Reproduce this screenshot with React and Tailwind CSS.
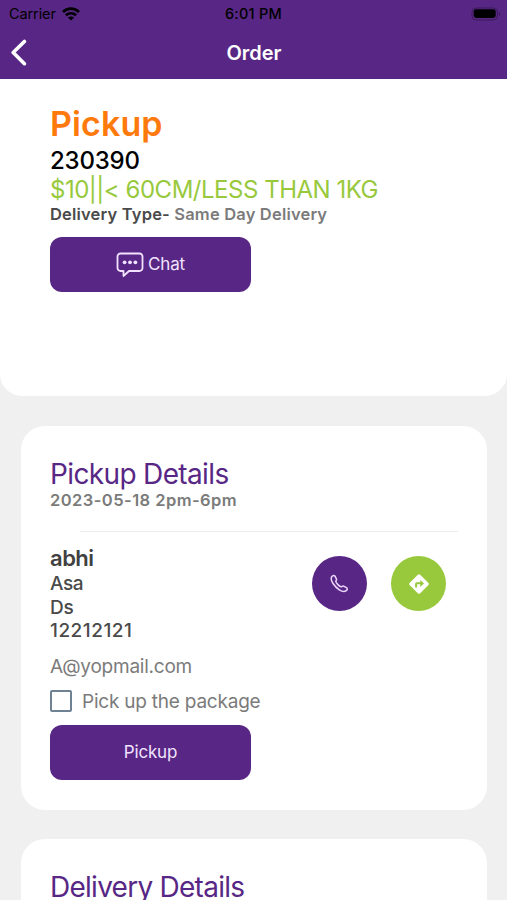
const line = "whitespace-nowrap";

function StatusBar() {
  return (
    <div className="flex h-[27px] items-center px-[9px] text-black">
      <div className="flex flex-1 items-center gap-[6px]">
        <span className="text-[14.5px] leading-[27px] tracking-[-0.1px]">Carrier</span>
        <svg width="18" height="14" viewBox="0 0 18 14" fill="none" stroke="#000" strokeWidth="2.6">
          <path d="M1 5C5.500 .5 12.500 .5 17 5" />
          <path d="M3.900 8.300C6.700 5.600 11.300 5.600 14.100 8.300" />
          <path d="M9 13.500L5.900 10.500C7.600 9 10.400 9 12.100 10.500Z" fill="#000" stroke="none" />
        </svg>
      </div>
      <span className="text-[14.5px] leading-[27px] font-medium tracking-[0.25px]">6:01 PM</span>
      <div className="flex flex-1 justify-end">
        <svg className="-mr-[3px]" width="30" height="14" viewBox="0 0 30 14">
          <rect x="1" y="1" width="25.5" height="12" rx="4" fill="none" stroke="#3b1a5c" />
          <rect x="2.7" y="2.2" width="22" height="8.8" rx="2.4" fill="#000" />
          <path d="M28 5v4c1.600-.6 1.600-3.400 0-4z" fill="#3b1a5c" />
        </svg>
      </div>
    </div>
  );
}

function Header() {
  return (
    <header className="h-[79px] bg-[#582785]">
      <StatusBar />
      <div className="flex h-[51px] items-center pl-[10px] pr-[26px]">
        <svg width="17" height="28" viewBox="0 0 17 28" fill="none" stroke="#fff" strokeWidth="3.6" strokeLinecap="round" strokeLinejoin="round">
          <path d="M14.400 2.500L3.200 13.500L14.400 24.700" />
        </svg>
        <h1 className="flex-1 text-center text-[20px] leading-[26px] font-semibold text-white">Order</h1>
      </div>
    </header>
  );
}

function ChatIcon() {
  return (
    <svg width="28" height="26" viewBox="0 0 28 26" fill="none" stroke="#f1e3ff" strokeWidth="1.800" strokeLinejoin="round">
      <path d="M4.500 1.500h19a3 3 0 0 1 3 3v11.500a3 3 0 0 1-3 3H13l-5.500 5v-5h-3a3 3 0 0 1-3-3V4.500a3 3 0 0 1 3-3z" />
      <g fill="#f1e3ff" stroke="none">
        <circle cx="8.600" cy="10.300" r="1.900" />
        <circle cx="14" cy="10.300" r="1.900" />
        <circle cx="19.400" cy="10.300" r="1.900" />
      </g>
    </svg>
  );
}

function PhoneIcon() {
  return (
    <svg width="19" height="19" viewBox="0 0 20 20" fill="none" stroke="#ecd5fb" strokeWidth="1.600" strokeLinejoin="round">
      <path d="M2 2.700C3 1.300 4.700 1.200 5.400 2.500L6.800 5.300C7.300 6.300 6.100 7 6.100 7.900C6.300 9.400 10 13.200 11.700 13.500C12.700 13.600 13.300 12.300 14.300 12.800L17.300 14.400C18.600 15.100 18.300 16.700 17.100 17.500C15.300 18.900 12.800 18.600 9.800 16.600C7.300 15 5 12.700 3.200 10C1.300 7.200 .7 4.500 2 2.700Z" />
    </svg>
  );
}

function DirectionsIcon() {
  return (
    <svg width="20" height="20" viewBox="0 0 20 20">
      <path d="M8.800 .8a1.700 1.700 0 0 1 2.400 0l8 8a1.700 1.700 0 0 1 0 2.400l-8 8a1.700 1.700 0 0 1-2.400 0l-8-8a1.700 1.700 0 0 1 0-2.400z" fill="#fff" />
      <path d="M6.100 13.400V10a1.700 1.700 0 0 1 1.700-1.700h3.500V5.900l3.700 3.500-3.700 3.500v-2.600H8.100v3.100z" fill="#98c93c" />
    </svg>
  );
}

export default function App() {
  return (
    <div className="h-[900px] w-[507px] overflow-hidden bg-[#f0f0f0] font-['Inter','Liberation_Sans',sans-serif]">
      <Header />
      <section className="h-[317px] rounded-b-[22px] bg-white px-[50px] pt-[24px]">
        <h2 className={`${line} h-[42px] text-[34px] leading-[41px] font-semibold tracking-[0.1px] text-[#ff7a0d]`}>Pickup</h2>
        <p className={`${line} h-[30px] text-[24px] leading-[31px] font-medium tracking-[-0.2px] text-black`}>230390</p>
        <p className={`${line} h-[29px] text-[24px] leading-[29px] tracking-[-0.48px] text-[#98c93c]`}>$10||&lt; 60CM/LESS THAN 1KG</p>
        <p className={`${line} h-[21px] text-[16.5px] leading-[21px] font-semibold tracking-[0.18px] text-[#4a4a4a]`}>
          Delivery Type- <span className="text-[#7b7b7b]">Same Day Delivery</span>
        </p>
        <button className="mt-[12px] flex h-[55px] w-[201px] items-center justify-center gap-[4px] rounded-[12px] bg-[#582785] text-[17px] tracking-[-0.1px] text-[#f1e3ff]">
          <ChatIcon />
          <span>Chat</span>
        </button>
      </section>

      <section className="mr-[20px] ml-[21px] mt-[30px] h-[384px] rounded-[24px] bg-white px-[29px] pt-[30px]">
        <h2 className={`${line} h-[34px] text-[28px] leading-[36px] tracking-[-0.64px] text-[#582785]`}>Pickup Details</h2>
        <p className={`${line} h-[21px] text-[16.5px] leading-[21px] font-semibold tracking-[0.45px] text-[#7b7b7b]`}>2023-05-18 2pm-6pm</p>
        <hr className="mt-[20px] ml-[30px] border-t border-[#ededed]" />
        <div className="mt-[12px] flex h-[110px]">
          <div className="w-[262px] text-[19px] text-[#4a4a4a]">
            <h3 className="h-[28px] text-[22px] leading-[28px] font-semibold tracking-[-0.5px] text-[#414141]">abhi</h3>
            <p className="h-[24px] leading-[24px] font-medium tracking-[-0.4px]">Asa</p>
            <p className="h-[23px] leading-[23px] font-medium tracking-[-0.2px]">Ds</p>
            <p className="h-[24px] leading-[24px] font-medium tracking-[0.5px]">12212121</p>
          </div>
          <div className="mt-[12px] flex gap-[24px]">
            <button className="flex size-[55px] items-center justify-center rounded-full bg-[#582785]"><PhoneIcon /></button>
            <button className="flex size-[55px] items-center justify-center rounded-full bg-[#98c93c]"><DirectionsIcon /></button>
          </div>
        </div>
        <p className={`${line} h-[24px] text-[19px] leading-[25px] tracking-[-0.23px] text-[#7b7b7b]`}>A@yopmail.com</p>
        <label className="mt-[11px] flex h-[24px] items-center gap-[10px]">
          <span className="size-[22px] rounded-[2px] border-2 border-[#6f8294]" />
          <span className={`${line} pt-[1px] text-[19px] leading-[24px] tracking-[-0.22px] text-[#7b7b7b]`}>Pick up the package</span>
        </label>
        <button className="mt-[12px] flex h-[55px] w-[201px] items-center justify-center rounded-[12px] bg-[#582785] pt-px text-[17px] tracking-[-0.15px] text-[#f1e3ff]">Pickup</button>
      </section>

      <section className="mr-[20px] ml-[21px] mt-[29px] h-[384px] rounded-[24px] bg-white px-[29px] pt-[30px]">
        <h2 className={`${line} h-[34px] text-[28px] leading-[36px] tracking-[-0.74px] text-[#582785]`}>Delivery Details</h2>
      </section>
    </div>
  );
}
